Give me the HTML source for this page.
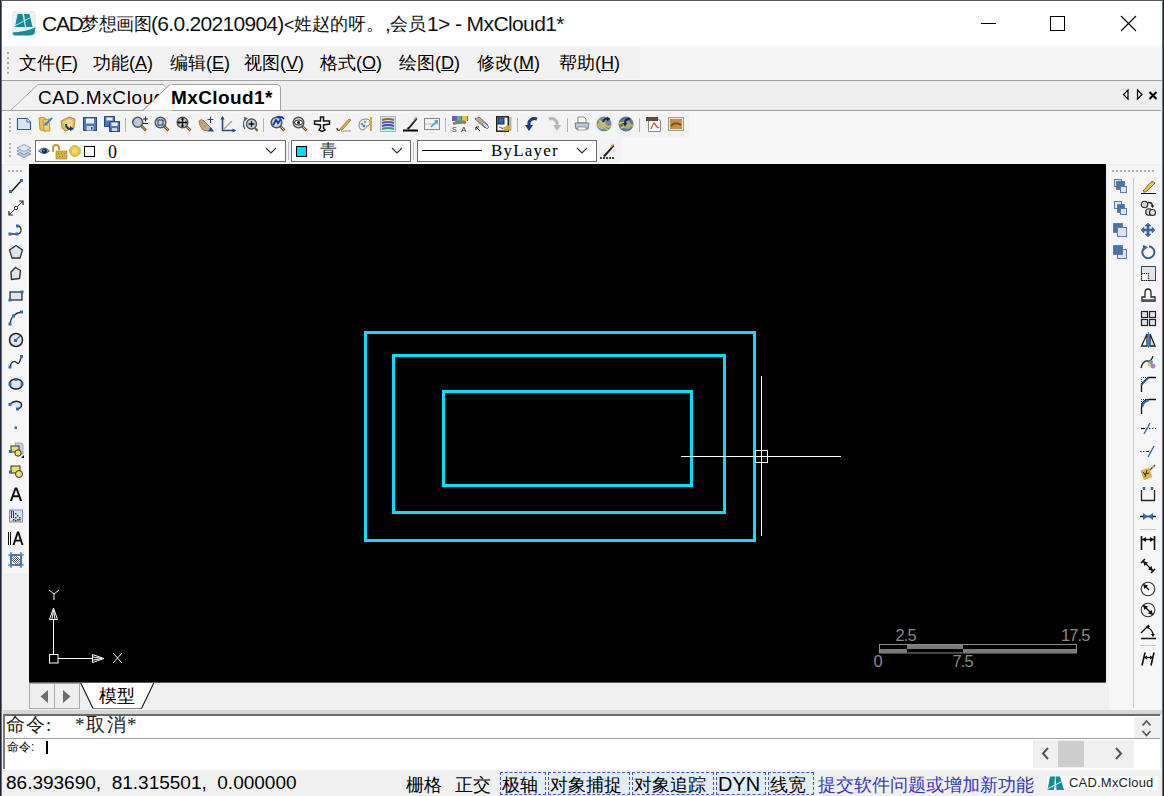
<!DOCTYPE html>
<html><head><meta charset="utf-8">
<style>
*{box-sizing:border-box}
html,body{margin:0;padding:0;width:1164px;height:796px;overflow:hidden;background:#f0f0f0;font-family:"Liberation Sans",sans-serif;color:#000}
.a{position:absolute}
svg{position:absolute;overflow:visible}
</style></head><body>
<div class="a" style="left:0;top:0;width:1164px;height:796px;background:#f0f0f0">

<!-- title bar -->
<div class="a" style="left:0;top:0;width:1164px;height:46px;background:#fff"></div>
<div class="a" style="left:0;top:11px;font-size:21px;line-height:26px;white-space:nowrap;color:#111">
<span class="a" style="left:42px;letter-spacing:-1.2px">CAD</span>
<span class="a" style="left:81px;top:0px;font-size:17.5px;letter-spacing:-0.4px">梦想画图</span>
<span class="a" style="left:151px;letter-spacing:-0.7px">(6.0.20210904)</span><span class="a" style="left:284px;top:1px;font-size:18px">&lt;</span>
<span class="a" style="left:294px;top:0px;font-size:18px;letter-spacing:0px">姓赵的呀。</span>
<span class="a" style="left:385px">,</span>
<span class="a" style="left:390px;top:0px;font-size:18px">会员</span>
<span class="a" style="left:427px;letter-spacing:-0.6px">1&gt; - MxCloud1*</span>
</div>

<!-- menu bar -->
<div class="a" style="left:0;top:46px;width:1164px;height:34px;background:#f5f5f5"></div><div class="a" style="left:4px;top:47px;width:636px;height:32px;background:#f2f2f2"></div>
<div class="a" id="menu" style="left:19px;top:51px;font-size:18px;line-height:24px;white-space:nowrap">
<span class="a" style="left:0">文件(<u>F</u>)</span>
<span class="a" style="left:74px">功能(<u>A</u>)</span>
<span class="a" style="left:151px">编辑(<u>E</u>)</span>
<span class="a" style="left:225px">视图(<u>V</u>)</span>
<span class="a" style="left:301px">格式(<u>O</u>)</span>
<span class="a" style="left:380px">绘图(<u>D</u>)</span>
<span class="a" style="left:458px">修改(<u>M</u>)</span>
<span class="a" style="left:540px">帮助(<u>H</u>)</span>
</div>

<!-- tab bar -->
<div class="a" style="left:0;top:80px;width:1162px;height:1px;background:#a0a0a0"></div>
<div class="a" style="left:0;top:81px;width:1162px;height:29px;background:#eeeeee"></div>
<div class="a" style="left:0;top:110px;width:1161px;height:1px;background:#a0a0a0"></div>

<!-- toolbar area -->
<div class="a" style="left:0;top:111px;width:1162px;height:53px;background:#f7f7f7"></div><div class="a" style="left:4px;top:113px;width:685px;height:24px;background:#f3f3f3"></div><div class="a" style="left:4px;top:138px;width:618px;height:25px;background:#f3f3f3"></div>

<!-- canvas -->
<div class="a" style="left:29px;top:164px;width:1077px;height:519px;background:#000"></div>

<!-- bottom tab bar -->
<div class="a" style="left:0;top:683px;width:1107px;height:27px;background:#f0f0f0"></div>

<!-- splitter -->
<div class="a" style="left:3px;top:710px;width:1159px;height:5px;background:#d6d6d6"></div>

<!-- command area -->
<div class="a" style="left:3px;top:714px;width:1157px;height:55px;background:#fff;border-left:2px solid #7a7a7a;border-top:2px solid #6a6a6a"></div>
<div class="a" style="left:4px;top:738px;width:1156px;height:1px;background:#a0a0a0"></div>

<!-- status bar -->
<div class="a" style="left:0;top:769px;width:1162px;height:27px;background:#f0f0f0"></div>


<!-- title icon -->
<svg style="left:12px;top:11px" width="24" height="24" viewBox="0 0 24 24">
<rect x="0" y="0" width="24" height="24" rx="3" fill="#efefef"/>
<polygon points="5.5,3 10.5,3 13,16 3,16" fill="#178a98"/>
<polygon points="12,3 17.5,3 20.5,16 14,16" fill="#178a98"/>
<line x1="2.5" y1="15" x2="19.5" y2="6" stroke="#a8ecf4" stroke-width="1"/>
<path d="M0.5,21.5 Q12,21 23.5,16.5 L22.5,22.5 Q21,24.5 17,24.5 L3,24.5 Q0.5,24 0.5,21.5Z" fill="#178a98"/>
</svg>
<!-- window buttons -->
<div class="a" style="left:981px;top:23px;width:15px;height:1px;background:#000"></div>
<div class="a" style="left:1050px;top:16px;width:15px;height:15px;border:1px solid #000"></div>
<svg style="left:1120px;top:15px" width="17" height="17" viewBox="0 0 17 17"><path d="M1,1L16,16M16,1L1,16" stroke="#000" stroke-width="1.1"/></svg>
<!-- menu gripper -->
<svg style="left:7px;top:52px" width="3" height="22"><g fill="#a8a8a8"><rect x="0" y="0" width="2" height="2"/><rect x="0" y="5" width="2" height="2"/><rect x="0" y="10" width="2" height="2"/><rect x="0" y="15" width="2" height="2"/><rect x="0" y="20" width="2" height="2"/></g></svg>
<!-- tabs -->
<svg style="left:0;top:80px" width="300" height="32" viewBox="0 0 300 32">
<path d="M10.5,30.5 L38,4.5 L163,4.5 L168,9 L168,30.5" fill="#f2f2f2" stroke="#a8a8a8" stroke-width="1"/>
<path d="M143,30.5 L170,4.5 L277,4.5 Q280.5,4.5 280.5,8 L280.5,30.5" fill="#ffffff" stroke="#a0a0a0" stroke-width="1"/>
<line x1="0" y1="30.5" x2="300" y2="30.5" stroke="#a0a0a0" stroke-width="1"/>
</svg>
<div class="a" style="left:38px;top:86px;width:122px;overflow:hidden;font-size:19px;line-height:24px;white-space:nowrap;letter-spacing:0.6px">CAD.MxCloud</div>
<svg style="left:140px;top:82px" width="32" height="28" viewBox="0 0 32 28"><path d="M3,28.5 L30,2.5 L32,2.5 L32,28.5Z" fill="#fff"/><path d="M3,28.5 L30,2.5" stroke="#a0a0a0" stroke-width="1"/></svg>
<div class="a" style="left:171px;top:86px;font-size:19px;line-height:24px;font-weight:bold;white-space:nowrap;letter-spacing:0.4px">MxCloud1*</div>
<svg style="left:1120px;top:88px" width="40" height="14" viewBox="0 0 40 14">
<path d="M8,2 L8,11 L3.5,6.5Z" fill="none" stroke="#000" stroke-width="1.2"/>
<path d="M17.5,2 L17.5,11 L22,6.5Z" fill="none" stroke="#000" stroke-width="1.2"/>
<path d="M29.5,4 L36.5,11 M36.5,4 L29.5,11" stroke="#000" stroke-width="2"/>
</svg>

<!--ICONS START-->
<div class="a" style="left:2px;top:164px;width:27px;height:519px;background:#f0f0f0"></div>
<div class="a" style="left:4px;top:166px;width:24px;height:407px;background:#f6f6f6"></div>
<svg style="left:8px;top:170px" width="16" height="3" viewBox="0 0 16 3"><rect x="0" y="0" width="2" height="2" fill="#b0b0b0"/><rect x="4" y="0" width="2" height="2" fill="#b0b0b0"/><rect x="8" y="0" width="2" height="2" fill="#b0b0b0"/><rect x="12" y="0" width="2" height="2" fill="#b0b0b0"/></svg>
<svg style="left:8px;top:178px" width="16" height="16" viewBox="0 0 16 16"><line x1="3" y1="14" x2="13" y2="3" stroke="#111" stroke-width="1.4"/><rect x="1" y="12" width="3" height="3" fill="#2f6db5"/><rect x="12" y="1" width="3" height="3" fill="#2f6db5"/></svg>
<svg style="left:8px;top:200px" width="16" height="16" viewBox="0 0 16 16"><line x1="1.5" y1="14.5" x2="14.5" y2="1.5" stroke="#222" stroke-width="1"/><path d="M1,11 L1,15 L5,15 M11,1 L15,1 L15,5" fill="none" stroke="#222" stroke-width="1.2"/><circle cx="8" cy="8" r="1.6" fill="#fff" stroke="#333" stroke-width="0.8"/></svg>
<svg style="left:8px;top:222px" width="16" height="16" viewBox="0 0 16 16"><path d="M2,12 L9,12 Q13,12 13,8 Q13,4 9.5,4" fill="none" stroke="#333" stroke-width="1.3"/><rect x="0.5" y="10.5" width="3" height="3" fill="#2f6db5"/><rect x="7.5" y="10.5" width="3" height="3" fill="#2f6db5"/><rect x="8" y="2.5" width="3" height="3" fill="#2f6db5"/></svg>
<svg style="left:8px;top:244px" width="16" height="16" viewBox="0 0 16 16"><polygon points="8,1.5 14.5,6 12,14 4,14 1.5,6" fill="#dde5ef" stroke="#333" stroke-width="1.3"/></svg>
<svg style="left:8px;top:266px" width="16" height="16" viewBox="0 0 16 16"><polygon points="7.5,1.5 12.5,4.5 11.5,12.5 3.5,13.5 3,6" fill="#dde5ef" stroke="#333" stroke-width="1.4"/></svg>
<svg style="left:8px;top:288px" width="16" height="16" viewBox="0 0 16 16"><rect x="2" y="4" width="12" height="8" fill="#dfe7f1" stroke="#222" stroke-width="1.2"/><rect x="0.5" y="10.5" width="3" height="3" fill="#2f6db5"/><rect x="12.5" y="2.5" width="3" height="3" fill="#2f6db5"/></svg>
<svg style="left:8px;top:310px" width="16" height="16" viewBox="0 0 16 16"><path d="M2,14 Q3,4 13,2" fill="none" stroke="#333" stroke-width="1.3"/><rect x="0.5" y="12.5" width="3" height="3" fill="#2f6db5"/><rect x="4" y="4.5" width="3" height="3" fill="#2f6db5"/><rect x="12" y="0.5" width="3" height="3" fill="#2f6db5"/></svg>
<svg style="left:8px;top:332px" width="16" height="16" viewBox="0 0 16 16"><circle cx="8" cy="8" r="6.5" fill="#e2e8f0" stroke="#222" stroke-width="1.5"/><line x1="7.5" y1="8.5" x2="12" y2="4" stroke="#2f6db5" stroke-width="1.2"/><rect x="6" y="7" width="3" height="3" fill="#2f6db5"/></svg>
<svg style="left:8px;top:354px" width="16" height="16" viewBox="0 0 16 16"><path d="M2,13 C4,6 7,7 9,9 C11,11 12,6 13.5,3" fill="none" stroke="#333" stroke-width="1.3"/><rect x="0.5" y="11.5" width="3" height="3" fill="#2f6db5"/><rect x="12" y="1" width="3" height="3" fill="#2f6db5"/></svg>
<svg style="left:8px;top:376px" width="16" height="16" viewBox="0 0 16 16"><ellipse cx="8" cy="8" rx="6.5" ry="5" fill="#dfe6ef" stroke="#222" stroke-width="1.5"/><rect x="0.5" y="6.5" width="3" height="3" fill="#2f6db5"/><rect x="12.5" y="6.5" width="3" height="3" fill="#2f6db5"/><rect x="6.5" y="2" width="3" height="3" fill="#2f6db5"/></svg>
<svg style="left:8px;top:398px" width="16" height="16" viewBox="0 0 16 16"><path d="M2,6 Q8,1 13,5 Q15,9 10,11" fill="#dfe6ef" stroke="#222" stroke-width="1.5"/><rect x="0.5" y="5" width="3" height="3" fill="#2f6db5"/><rect x="8" y="9.5" width="3" height="3" fill="#2f6db5"/></svg>
<svg style="left:8px;top:420px" width="16" height="16" viewBox="0 0 16 16"><rect x="6.5" y="6.5" width="2.5" height="2.5" fill="#2f6db5"/></svg>
<svg style="left:8px;top:442px" width="16" height="16" viewBox="0 0 16 16"><path d="M7,1 L14,1 L15,3 L15,12 L9,12 Z" fill="#c8d0dc" stroke="#8a96a8" stroke-width="0.8"/><rect x="3" y="4" width="8" height="6" fill="#e8e070" stroke="#333" stroke-width="1"/><circle cx="10" cy="11" r="3.2" fill="#e8e070" stroke="#333" stroke-width="1"/><rect x="1" y="8" width="3" height="3" fill="#2f6db5"/><polygon points="13,16 16,13 16,16" fill="#000"/></svg>
<svg style="left:8px;top:464px" width="16" height="16" viewBox="0 0 16 16"><rect x="3" y="2" width="9" height="7" fill="#e8e070" stroke="#333" stroke-width="1"/><circle cx="11" cy="10" r="3.5" fill="#e8e070" stroke="#333" stroke-width="1"/><rect x="1" y="6.5" width="3" height="3" fill="#2f6db5"/></svg>
<svg style="left:8px;top:486px" width="16" height="16" viewBox="0 0 16 16"><path d="M1.8,15 L6.8,1.5 L9.2,1.5 L14.2,15 L12,15 L10.7,11.2 L5.3,11.2 L4,15 Z M6,9.3 L10,9.3 L8,3.8 Z" fill="#111"/></svg>
<svg style="left:8px;top:508px" width="16" height="16" viewBox="0 0 16 16"><rect x="1.5" y="2" width="13" height="12" fill="#d6e2f4" stroke="#6f8fbf" stroke-width="1"/><path d="M3.5,3 L3.5,10 M5.5,3 L5.5,10" stroke="#222" stroke-width="0.9"/><path d="M2.5,3 L4.5,3" stroke="#222" stroke-width="0.8"/><g fill="#333"><rect x="7" y="5" width="1.5" height="1.5"/><rect x="9" y="7" width="1.5" height="1.5"/><rect x="7" y="9" width="1.5" height="1.5"/><rect x="11" y="9" width="1.5" height="1.5"/><rect x="9" y="11" width="1.5" height="1.5"/><rect x="5" y="11" width="1.5" height="1.5"/><rect x="11" y="11" width="1.5" height="1.5"/><rect x="7" y="12" width="1.5" height="1.5"/></g><g fill="#d87a30"><rect x="4" y="12" width="1.5" height="1.5"/><rect x="10" y="12" width="1.5" height="1.5"/></g></svg>
<svg style="left:8px;top:530px" width="16" height="16" viewBox="0 0 16 16"><rect x="0" y="2" width="1" height="13" fill="#111"/><rect x="2" y="2" width="1" height="13" fill="#111"/><path d="M4.5,15 L9,1.5 L11,1.5 L15.5,15 L13.5,15 L12.3,11.5 L7.7,11.5 L6.5,15 Z M8.3,9.7 L11.7,9.7 L10,4.5 Z" fill="#111"/></svg>
<svg style="left:8px;top:552px" width="16" height="16" viewBox="0 0 16 16"><rect x="3" y="3" width="10" height="10" fill="#fff" stroke="#2f6db5" stroke-width="1.4"/><path d="M3,7 L9,13 M3,3 L13,13 M7,3 L13,9 M5,3 L13,11 M3,5 L11,13" stroke="#555" stroke-width="0.8"/><path d="M0,3 L16,3 M0,13 L16,13 M3,0 L3,16 M13,0 L13,16" stroke="#2f6db5" stroke-width="1.2"/></svg>
<div class="a" style="left:1106px;top:164px;width:56px;height:546px;background:#f0f0f0"></div>
<div class="a" style="left:1109px;top:166px;width:52px;height:544px;background:#f6f6f6"></div>
<svg style="left:1112px;top:170px" width="44" height="3" viewBox="0 0 44 3"><rect x="0" y="0" width="2" height="2" fill="#b0b0b0"/><rect x="4" y="0" width="2" height="2" fill="#b0b0b0"/><rect x="8" y="0" width="2" height="2" fill="#b0b0b0"/><rect x="12" y="0" width="2" height="2" fill="#b0b0b0"/><rect x="16" y="0" width="2" height="2" fill="#b0b0b0"/><rect x="20" y="0" width="2" height="2" fill="#b0b0b0"/><rect x="24" y="0" width="2" height="2" fill="#b0b0b0"/><rect x="28" y="0" width="2" height="2" fill="#b0b0b0"/><rect x="32" y="0" width="2" height="2" fill="#b0b0b0"/><rect x="36" y="0" width="2" height="2" fill="#b0b0b0"/><rect x="40" y="0" width="2" height="2" fill="#b0b0b0"/></svg>
<div class="a" style="left:1133px;top:178px;width:1px;height:530px;background:#c8c8c8"></div>
<svg style="left:1112px;top:178px" width="16" height="16" viewBox="0 0 16 16"><rect x="2.5" y="1.5" width="7" height="7" fill="#dbe6f3" stroke="#5a7fb3"/><rect x="4.5" y="3.5" width="8" height="8" fill="#4e73aa" stroke="#2a4a80" stroke-dasharray="1,1"/><rect x="8.5" y="8.5" width="6" height="6" fill="#dbe6f3" stroke="#5a7fb3"/></svg>
<svg style="left:1112px;top:200px" width="16" height="16" viewBox="0 0 16 16"><rect x="2.5" y="1.5" width="7" height="7" fill="#dbe6f3" stroke="#5a7fb3"/><rect x="5.5" y="4.5" width="7" height="8" fill="#4e73aa" stroke="#2a4a80" stroke-dasharray="1,1"/><rect x="8.5" y="8.5" width="6" height="6" fill="#dbe6f3" stroke="#5a7fb3"/></svg>
<svg style="left:1112px;top:222px" width="16" height="16" viewBox="0 0 16 16"><rect x="1.5" y="1.5" width="9" height="9" fill="#4e73aa" stroke="#2a4a80" stroke-width="1" stroke-dasharray="1,1"/><rect x="5.5" y="5.5" width="9" height="9" fill="#dbe6f3" stroke="#5a7fb3" stroke-width="1"/></svg>
<svg style="left:1112px;top:244px" width="16" height="16" viewBox="0 0 16 16"><rect x="5.5" y="5.5" width="9" height="9" fill="#dbe6f3" stroke="#5a7fb3" stroke-width="1"/><rect x="1.5" y="1.5" width="9" height="9" fill="#4e73aa" stroke="#2a4a80" stroke-width="1" stroke-dasharray="1,1"/></svg>
<svg style="left:1140px;top:178px" width="16" height="16" viewBox="0 0 16 16"><path d="M3,13 L12,3 L15,5 L6,14 Z" fill="#f0c040" stroke="#555" stroke-width="0.8"/><path d="M3,13 L6,14 L4,15 Z" fill="#c88"/><line x1="1" y1="15.5" x2="16" y2="15.5" stroke="#111" stroke-width="1"/></svg>
<svg style="left:1140px;top:200px" width="16" height="16" viewBox="0 0 16 16"><circle cx="4.5" cy="4.5" r="3.2" fill="#d0d4dc" stroke="#222" stroke-width="1.1"/><path d="M8,2.5 Q12,2 12.5,6" fill="none" stroke="#222" stroke-width="1.4"/><polygon points="10.5,5.5 14.5,5.5 12.5,8" fill="#222"/><circle cx="9" cy="12" r="3.3" fill="#d0d4dc" stroke="#222" stroke-width="1.1"/><circle cx="12.5" cy="12.5" r="3" fill="#e4e6ea" stroke="#222" stroke-width="1.1"/></svg>
<svg style="left:1140px;top:222px" width="16" height="16" viewBox="0 0 16 16"><path d="M8,1 L11,4 L9,4 L9,7 L12,7 L12,5 L15,8 L12,11 L12,9 L9,9 L9,12 L11,12 L8,15 L5,12 L7,12 L7,9 L4,9 L4,11 L1,8 L4,5 L4,7 L7,7 L7,4 L5,4 Z" fill="#3a6ab0" stroke="#244a88" stroke-width="0.5"/></svg>
<svg style="left:1140px;top:244px" width="16" height="16" viewBox="0 0 16 16"><path d="M4,4 A6,6 0 1 0 9,2.2" fill="none" stroke="#3a5f9a" stroke-width="2"/><polygon points="3,1 8,3 3,7" fill="#3a5f9a"/></svg>
<svg style="left:1140px;top:266px" width="16" height="16" viewBox="0 0 16 16"><rect x="1.5" y="0.5" width="14" height="14" fill="#dde6f0" stroke="#444" stroke-width="1"/><rect x="1.5" y="7.5" width="7" height="7" fill="#f4f6f8" stroke="#111" stroke-width="1.2" stroke-dasharray="1.2,1"/></svg>
<svg style="left:1140px;top:288px" width="16" height="16" viewBox="0 0 16 16"><path d="M2,13 L2,9 L5,9 L5,5 Q5,1 8,1 Q11,1 11,5 L11,9 L15,9 L15,13 Z" fill="#fff" stroke="#222" stroke-width="1.3"/><path d="M3,11.5 L14,11.5" stroke="#3a7fd0" stroke-width="1"/></svg>
<svg style="left:1140px;top:310px" width="16" height="16" viewBox="0 0 16 16"><rect x="1.5" y="1.5" width="6" height="6" fill="#dde6f0" stroke="#222" stroke-width="1.2"/><rect x="9.5" y="1.5" width="6" height="6" fill="#dde6f0" stroke="#222" stroke-width="1.2"/><rect x="1.5" y="9.5" width="6" height="6" fill="#dde6f0" stroke="#222" stroke-width="1.2"/><rect x="9.5" y="9.5" width="6" height="6" fill="#dde6f0" stroke="#222" stroke-width="1.2"/></svg>
<svg style="left:1140px;top:332px" width="16" height="16" viewBox="0 0 16 16"><polygon points="7,2 7,14 1.5,14" fill="#fff" stroke="#222" stroke-width="1.3"/><polygon points="10,2 10,14 15,14" fill="#dde6f0" stroke="#222" stroke-width="1.3"/><line x1="8.5" y1="0" x2="8.5" y2="16" stroke="#3a7fd0" stroke-width="1"/></svg>
<svg style="left:1140px;top:354px" width="16" height="16" viewBox="0 0 16 16"><path d="M1,14 Q3,6 8,7 Q11,8 13,2" fill="none" stroke="#222" stroke-width="1.3"/><circle cx="10" cy="10" r="2.5" fill="#e8c84a"/><circle cx="13" cy="12" r="2.5" fill="#b080d0"/><circle cx="11" cy="8" r="2" fill="#5a9ad8"/></svg>
<svg style="left:1140px;top:376px" width="16" height="16" viewBox="0 0 16 16"><path d="M1.5,16 L1.5,8 L8,1.5 L16,1.5" fill="none" stroke="#111" stroke-width="1.3"/><path d="M1.5,8 L1.5,1.5 L8,1.5" fill="none" stroke="#333" stroke-width="1" stroke-dasharray="1,1"/><line x1="1.5" y1="9" x2="9" y2="1.5" stroke="#2f6db5" stroke-width="1.6"/></svg>
<svg style="left:1140px;top:398px" width="16" height="16" viewBox="0 0 16 16"><path d="M1.5,16 L1.5,9 Q2,2 9,1.5 L16,1.5" fill="none" stroke="#111" stroke-width="1.3"/><path d="M1.5,8 L1.5,1.5 L8,1.5" fill="none" stroke="#333" stroke-width="1" stroke-dasharray="1,1"/><path d="M2.5,9 Q3,3 9,2.5" fill="none" stroke="#2f6db5" stroke-width="1.8"/></svg>
<svg style="left:1140px;top:420px" width="16" height="16" viewBox="0 0 16 16"><line x1="1" y1="8.5" x2="5" y2="8.5" stroke="#111" stroke-width="1.2"/><line x1="9" y1="8.5" x2="16" y2="8.5" stroke="#333" stroke-width="1" stroke-dasharray="1.5,1.5"/><line x1="4" y1="14" x2="10" y2="3" stroke="#2f6db5" stroke-width="1.4"/></svg>
<svg style="left:1140px;top:442px" width="16" height="16" viewBox="0 0 16 16"><line x1="0" y1="9.5" x2="7" y2="9.5" stroke="#333" stroke-width="1" stroke-dasharray="1.5,1.5"/><line x1="7" y1="9.5" x2="9" y2="9.5" stroke="#111" stroke-width="1.2"/><line x1="8" y1="15" x2="14" y2="4" stroke="#2f6db5" stroke-width="1.4"/></svg>
<svg style="left:1140px;top:464px" width="16" height="16" viewBox="0 0 16 16"><rect x="2" y="5" width="9" height="10" fill="#e0b040" transform="rotate(-20 6 10)"/><path d="M3,8 L6,12 M7,6 L5,13 M9,9 L4,10" stroke="#333" stroke-width="1"/><path d="M10,6 L15,1" stroke="#555" stroke-width="1.5"/><circle cx="13" cy="3" r="1" fill="#aaa"/></svg>
<svg style="left:1140px;top:486px" width="16" height="16" viewBox="0 0 16 16"><path d="M1.5,4 L1.5,14.5 L14.5,14.5 L14.5,4" fill="none" stroke="#222" stroke-width="1.3"/><path d="M4,4 L4,1 M12,4 L12,1" stroke="#2f6db5" stroke-width="2.5"/></svg>
<svg style="left:1140px;top:508px" width="16" height="16" viewBox="0 0 16 16"><line x1="0" y1="8.5" x2="16" y2="8.5" stroke="#111" stroke-width="1.5"/><polygon points="3,5 8,8.5 3,12" fill="#2f6db5"/><polygon points="13,5 8,8.5 13,12" fill="#2f6db5"/></svg>
<svg style="left:1140px;top:536px" width="16" height="16" viewBox="0 0 16 16"><path d="M1.5,0 L1.5,14 M14.5,0 L14.5,14" stroke="#111" stroke-width="1.6"/><line x1="1.5" y1="3.5" x2="14.5" y2="3.5" stroke="#111" stroke-width="1.3"/><polygon points="2,3.5 6,1 6,6" fill="#111"/><polygon points="14,3.5 10,1 10,6" fill="#111"/></svg>
<svg style="left:1140px;top:558px" width="16" height="16" viewBox="0 0 16 16"><path d="M1,5 L5,1 M11,15 L15,11" stroke="#111" stroke-width="1.6"/><line x1="3" y1="3" x2="13" y2="13" stroke="#111" stroke-width="1.3"/><polygon points="3,3 8,4.5 4.5,8" fill="#111"/><polygon points="13,13 8,11.5 11.5,8" fill="#111"/></svg>
<svg style="left:1140px;top:581px" width="16" height="16" viewBox="0 0 16 16"><circle cx="8" cy="8" r="6.8" fill="none" stroke="#333" stroke-width="1.1"/><line x1="4" y1="4" x2="9" y2="9" stroke="#111" stroke-width="1.4"/><polygon points="3,3 8,4.5 4.5,8" fill="#111"/></svg>
<svg style="left:1140px;top:602px" width="16" height="16" viewBox="0 0 16 16"><circle cx="8" cy="8" r="6.8" fill="none" stroke="#333" stroke-width="1.1"/><line x1="3.5" y1="3.5" x2="12.5" y2="12.5" stroke="#111" stroke-width="1.4"/><polygon points="3,3 8,4.5 4.5,8" fill="#111"/><polygon points="13,13 8,11.5 11.5,8" fill="#111"/></svg>
<svg style="left:1140px;top:623px" width="16" height="16" viewBox="0 0 16 16"><path d="M1,10 L9,2" stroke="#111" stroke-width="1.4"/><line x1="1" y1="15.5" x2="16" y2="15.5" stroke="#111" stroke-width="1.5"/><path d="M7,4 Q13,7 13,12" fill="none" stroke="#111" stroke-width="1.3"/><polygon points="11,11 15,11 13,14" fill="#111"/><polygon points="6,3 10,3 8,6" fill="#111"/></svg>
<svg style="left:1140px;top:652px" width="16" height="16" viewBox="0 0 16 16"><path d="M2,13.5 L5,0.5 M11,13.5 L14,0.5" stroke="#111" stroke-width="1.6"/><line x1="4" y1="5.5" x2="13" y2="5.5" stroke="#111" stroke-width="1.3"/><polygon points="4,5.5 7,3.5 7,7.5" fill="#111"/><polygon points="13,5.5 10,3.5 10,7.5" fill="#111"/></svg>
<div class="a" style="left:1140px;top:529px;width:16px;height:1px;background:#c8c8c8"></div>
<div class="a" style="left:1140px;top:645px;width:16px;height:1px;background:#c8c8c8"></div>
<svg style="left:9px;top:118px" width="3" height="16" viewBox="0 0 3 16"><rect x="0" y="0" width="2" height="2" fill="#b0b0b0"/><rect x="0" y="4" width="2" height="2" fill="#b0b0b0"/><rect x="0" y="8" width="2" height="2" fill="#b0b0b0"/><rect x="0" y="12" width="2" height="2" fill="#b0b0b0"/></svg>
<svg style="left:16px;top:116px" width="16" height="16" viewBox="0 0 16 16"><path d="M1.5,2.5 L11,2.5 L14.5,6 L14.5,13.5 L1.5,13.5 Z" fill="#d8e6f4" stroke="#3a5f9a" stroke-width="1.2"/><path d="M11,2.5 L11,6 L14.5,6" fill="#fff" stroke="#3a5f9a" stroke-width="1"/></svg>
<svg style="left:38px;top:116px" width="16" height="16" viewBox="0 0 16 16"><path d="M1,2 L6,1 L8,3 L8,15 L2,14 Z" fill="#e8c050" stroke="#b08a30" stroke-width="0.8"/><path d="M5,4 L11,3 L12,15 L6,15 Z" fill="#f0d070" stroke="#b08a30" stroke-width="0.8"/><path d="M8,8 L14,2" stroke="#3a8ad0" stroke-width="2"/><polygon points="7,6 10,9 6,10" fill="#3a8ad0"/></svg>
<svg style="left:60px;top:116px" width="16" height="16" viewBox="0 0 16 16"><path d="M1,5 L9,1 L15,3 L14,12 L5,15 L2,12 Z" fill="#e0b850" stroke="#a08040" stroke-width="0.8"/><path d="M3,6 L9,3 L13,5 L12,11 L6,13 Z" fill="#f0d890"/><path d="M6,8 Q6,13 11,13" fill="none" stroke="#1a3a6a" stroke-width="2"/><polygon points="10,10 14,13 10,15" fill="#1a3a6a"/></svg>
<svg style="left:82px;top:116px" width="16" height="16" viewBox="0 0 16 16"><rect x="1.5" y="1.5" width="13" height="13" fill="#4a78b8" stroke="#2a4a80" stroke-width="1"/><rect x="4" y="2.5" width="8" height="5" fill="#eef2f8"/><rect x="4.5" y="10" width="7" height="4.5" fill="#c8d4e4"/><rect x="9" y="11" width="1.5" height="2.5" fill="#2a4a80"/></svg>
<svg style="left:104px;top:116px" width="16" height="16" viewBox="0 0 16 16"><rect x="0.5" y="0.5" width="10" height="10" fill="#4a78b8" stroke="#2a4a80" stroke-width="1"/><rect x="2.5" y="1.5" width="6" height="3" fill="#eef2f8"/><rect x="5.5" y="5.5" width="10" height="10" fill="#4a78b8" stroke="#2a4a80" stroke-width="1"/><rect x="7.5" y="6.5" width="6" height="3.5" fill="#eef2f8"/><rect x="8" y="12" width="5" height="3" fill="#c8d4e4"/></svg>
<svg style="left:132px;top:116px" width="16" height="16" viewBox="0 0 16 16"><line x1="9" y1="9.5" x2="14" y2="14.5" stroke="#7a5a30" stroke-width="2.6"/><line x1="9.5" y1="10" x2="13.5" y2="14" stroke="#e0b060" stroke-width="1"/><circle cx="5.7" cy="6.2" r="5" fill="#b8c8dc" stroke="#555" stroke-width="1.5"/><path d="M13.5,0.5 L13.5,5.5 M11,3 L16,3 M11,7.5 L16,7.5" stroke="#222" stroke-width="1.1"/></svg>
<svg style="left:154px;top:116px" width="16" height="16" viewBox="0 0 16 16"><line x1="10" y1="10" x2="14.5" y2="14.5" stroke="#7a5a30" stroke-width="2.6"/><line x1="10.5" y1="10.5" x2="14" y2="14" stroke="#e0b060" stroke-width="1"/><circle cx="6.5" cy="6.5" r="5.3" fill="#c8d4e0" stroke="#555" stroke-width="1.5"/><rect x="4" y="4" width="5" height="5" fill="none" stroke="#2a4a80" stroke-width="1.2"/></svg>
<svg style="left:176px;top:116px" width="16" height="16" viewBox="0 0 16 16"><line x1="10" y1="10" x2="14.5" y2="14.5" stroke="#7a5a30" stroke-width="2.6"/><line x1="10.5" y1="10.5" x2="14" y2="14" stroke="#e0b060" stroke-width="1"/><circle cx="6.5" cy="6.5" r="5.3" fill="#c8d4e0" stroke="#555" stroke-width="1.5"/><path d="M6.5,2.5 L6.5,10.5 M2.5,6.5 L10.5,6.5" stroke="#111" stroke-width="1.5"/><polygon points="6.5,1.5 8.5,3.5 4.5,3.5" fill="#111"/><polygon points="6.5,11.5 8.5,9.5 4.5,9.5" fill="#111"/><polygon points="1.5,6.5 3.5,4.5 3.5,8.5" fill="#111"/><polygon points="11.5,6.5 9.5,4.5 9.5,8.5" fill="#111"/></svg>
<svg style="left:198px;top:116px" width="16" height="16" viewBox="0 0 16 16"><path d="M1,5 Q3,2 6,5 L12,11 Q13,14 10,15 L5,14 Q1,10 1,5Z" fill="#c8a888" stroke="#8a6a50" stroke-width="0.8"/><path d="M3,6 L8,11 M5,4 L10,9" stroke="#5a6ab0" stroke-width="0.8" stroke-dasharray="1,1"/><path d="M12.5,0.5 L12.5,7 M9.5,3.5 L15.5,3.5" stroke="#2a4a80" stroke-width="1.2"/><polygon points="10,15.5 13,11 16,15.5" fill="#2a4a80"/></svg>
<svg style="left:220px;top:116px" width="16" height="16" viewBox="0 0 16 16"><path d="M2.5,1 L2.5,14.5 L15.5,14.5" fill="none" stroke="#2a4a80" stroke-width="1.6"/><polygon points="2.5,0 0.5,3.5 4.5,3.5" fill="#2a4a80"/><polygon points="16,14.5 12.5,12.5 12.5,16.5" fill="#2a4a80"/><line x1="4" y1="13" x2="12" y2="5" stroke="#9aa4b0" stroke-width="1.3"/></svg>
<svg style="left:242px;top:116px" width="16" height="16" viewBox="0 0 16 16"><path d="M3,3 Q0,8 3,13" fill="none" stroke="#556" stroke-width="1.2"/><polygon points="2,1 6,2 3,5" fill="#556"/><circle cx="9.5" cy="8" r="5" fill="#c8d4e0" stroke="#555" stroke-width="1.4"/><path d="M9.5,5 L9.5,11 M6.5,8 L12.5,8" stroke="#111" stroke-width="1.3"/><line x1="13" y1="12" x2="15.5" y2="15" stroke="#7a5a30" stroke-width="2"/></svg>
<svg style="left:270px;top:116px" width="16" height="16" viewBox="0 0 16 16"><line x1="10" y1="10" x2="14.5" y2="14.5" stroke="#7a5a30" stroke-width="2.6"/><line x1="10.5" y1="10.5" x2="14" y2="14" stroke="#e0b060" stroke-width="1"/><circle cx="6.5" cy="6.5" r="5.3" fill="#c8d4e0" stroke="#555" stroke-width="1.5"/><path d="M3,9 L6,4 L8,7 L11,3" fill="none" stroke="#1a3ab0" stroke-width="2"/><path d="M7,1 Q12,0 14,3" fill="none" stroke="#1a3ab0" stroke-width="2"/></svg>
<svg style="left:292px;top:116px" width="16" height="16" viewBox="0 0 16 16"><line x1="10" y1="10" x2="14.5" y2="14.5" stroke="#7a5a30" stroke-width="2.6"/><line x1="10.5" y1="10.5" x2="14" y2="14" stroke="#e0b060" stroke-width="1"/><circle cx="6.5" cy="6.5" r="5.3" fill="#d8d8d8" stroke="#555" stroke-width="1.5"/><ellipse cx="6.5" cy="6.5" rx="4" ry="2.5" fill="#fff" stroke="#222" stroke-width="1"/><circle cx="6.5" cy="6.5" r="1.5" fill="#111"/></svg>
<svg style="left:314px;top:116px" width="16" height="16" viewBox="0 0 16 16"><path d="M6.5,1 L9.5,1 L9.5,5 L15.5,5 L15.5,8 L9.5,9 L9.5,12 L11,14 L8,15.5 L5,14 L6.5,12 L6.5,9 L0.5,8 L0.5,5 L6.5,5 Z" fill="#fff" stroke="#111" stroke-width="1.5"/></svg>
<svg style="left:336px;top:116px" width="16" height="16" viewBox="0 0 16 16"><path d="M4,13 L13,3 L15,4 L6,14 Z" fill="#e8b030" stroke="#8a6a20" stroke-width="0.8"/><path d="M1,12 Q1,15 4,14" fill="none" stroke="#111" stroke-width="1.2"/><line x1="5" y1="15" x2="15" y2="15" stroke="#777" stroke-width="0.8"/></svg>
<svg style="left:358px;top:116px" width="16" height="16" viewBox="0 0 16 16"><path d="M1,9 Q1,3 8,3 Q13,3 12,8 Q11,10 9,10 Q8,13 5,14 Q1,14 1,9Z" fill="#e8eef4" stroke="#6a88b0" stroke-width="1"/><circle cx="4" cy="8" r="1.2" fill="#5a9a5a"/><circle cx="7" cy="6" r="1.2" fill="#d89030"/><circle cx="6" cy="10" r="1.3" fill="#3a7ab8"/><path d="M13,1 L13,15" stroke="#d89a30" stroke-width="1.8"/></svg>
<svg style="left:380px;top:116px" width="16" height="16" viewBox="0 0 16 16"><rect x="0.5" y="0.5" width="15" height="15" fill="#dde6f0" stroke="#aab4c0" stroke-width="1"/><path d="M2,4 Q8,2 14,4" fill="none" stroke="#8a7030" stroke-width="2.2"/><path d="M2,7 Q8,5 14,7" fill="none" stroke="#7a4ac0" stroke-width="2.2"/><path d="M2,10 Q8,8 14,10" fill="none" stroke="#3a4ad0" stroke-width="2.2"/><path d="M2,13 Q8,11 14,13" fill="none" stroke="#30a080" stroke-width="2.2"/></svg>
<svg style="left:402px;top:116px" width="16" height="16" viewBox="0 0 16 16"><line x1="1" y1="14.5" x2="16" y2="14.5" stroke="#000" stroke-width="2"/><path d="M5,13 L14,2 L15.5,3 L7,13.5 Z" fill="#222"/><path d="M12,4 L14.5,1" stroke="#e0a030" stroke-width="1.5"/><path d="M4,13.5 Q6,10 8,11" fill="#111"/></svg>
<svg style="left:424px;top:116px" width="16" height="16" viewBox="0 0 16 16"><rect x="0.5" y="2.5" width="15" height="11" fill="#f4f4f4" stroke="#888" stroke-width="1"/><line x1="1" y1="8" x2="15" y2="8" stroke="#aaa" stroke-width="0.8"/><line x1="7" y1="11" x2="13" y2="5" stroke="#3a9ad8" stroke-width="1.6"/><polygon points="14,4 10,4.5 13.5,8" fill="#3a9ad8"/></svg>
<svg style="left:452px;top:116px" width="16" height="16" viewBox="0 0 16 16"><rect x="0" y="0" width="16" height="5" fill="#7a5ab8"/><rect x="5" y="0" width="4" height="5" fill="#3ab8a8"/><rect x="10" y="0" width="5" height="5" fill="#e8c040"/><path d="M1,8 Q8,4 14,7" stroke="#7a8a70" stroke-width="3"/><text x="0" y="16" font-size="7" font-family="Liberation Sans" fill="#334">S</text><text x="9" y="16" font-size="8" font-family="Liberation Sans" fill="#334">A</text></svg>
<svg style="left:474px;top:116px" width="16" height="16" viewBox="0 0 16 16"><path d="M1,3 L5,1 L14,9 L11,12 Z" fill="#b8a898" stroke="#6a5a50" stroke-width="0.8"/><path d="M8,8 L13,13 L15,11 L10,6 Z" fill="#c8dcf0" stroke="#5a7090" stroke-width="0.8"/><path d="M2,11 L6,15 M2,11 L2,14 M2,11 L5,11" stroke="#222" stroke-width="1"/></svg>
<svg style="left:496px;top:116px" width="16" height="16" viewBox="0 0 16 16"><rect x="12" y="1" width="3.5" height="14" fill="#b0b0b0"/><rect x="0.75" y="0.75" width="11.5" height="14.5" fill="#fff" stroke="#222" stroke-width="1.5"/><rect x="2" y="2" width="6" height="6" fill="#2a6ab8" stroke="#1a2a4a" stroke-width="1"/><path d="M6,12 L12,9 L15,12 L12,15 L8,14 Z" fill="#e0a820"/><line x1="3" y1="11" x2="7" y2="12.5" stroke="#333" stroke-width="0.8"/></svg>
<svg style="left:524px;top:116px" width="16" height="16" viewBox="0 0 16 16"><path d="M13,3 Q8,1 5,6 L5,11" fill="none" stroke="#1a3a8a" stroke-width="3"/><polygon points="1,9 9,9 5,15" fill="#1a3a8a"/></svg>
<svg style="left:546px;top:116px" width="16" height="16" viewBox="0 0 16 16"><path d="M3,3 Q8,1 11,6 L11,11" fill="none" stroke="#b8b8b8" stroke-width="3"/><polygon points="7,9 15,9 11,15" fill="#b8b8b8"/></svg>
<svg style="left:574px;top:116px" width="16" height="16" viewBox="0 0 16 16"><path d="M4,1 L10,1 L12,3 L12,7 L4,7 Z" fill="#fff" stroke="#666" stroke-width="0.8"/><path d="M1,7 L15,7 L14,13 L2,13 Z" fill="#c0c8d8" stroke="#5a6070" stroke-width="0.8"/><rect x="4" y="11" width="8" height="3" fill="#fff" stroke="#666" stroke-width="0.6"/></svg>
<svg style="left:596px;top:116px" width="16" height="16" viewBox="0 0 16 16"><circle cx="8" cy="8" r="7.5" fill="#6f9098"/><circle cx="6" cy="9" r="4" fill="#a8b8b0"/><path d="M1,10 Q5,6 9,9 Q12,12 15,10" fill="none" stroke="#d8b838" stroke-width="2"/><path d="M3,4 L8,8 M9,12 L12,14" stroke="#e0c040" stroke-width="1.5"/><path d="M7,6 Q8,2 12,3" fill="none" stroke="#1a2a5a" stroke-width="2"/><polygon points="11,0.5 14.5,3 11,5.5" fill="#1a2a5a"/></svg>
<svg style="left:618px;top:116px" width="16" height="16" viewBox="0 0 16 16"><circle cx="8" cy="8" r="7.5" fill="#5a7a88"/><circle cx="9" cy="9" r="4" fill="#98a8a8"/><path d="M1,8 Q5,5 9,8 Q12,11 15,9" fill="none" stroke="#d8b838" stroke-width="2"/><path d="M3,12 L7,10" stroke="#e0c040" stroke-width="1.5"/><path d="M12,3 Q7,2 7,8" fill="none" stroke="#1a2a5a" stroke-width="2.2"/><polygon points="4.5,7 9.5,7 7,10.5" fill="#1a2a5a"/></svg>
<svg style="left:646px;top:116px" width="16" height="16" viewBox="0 0 16 16"><path d="M2.5,1.5 L11,1.5 L14.5,5 L14.5,15.5 L2.5,15.5 Z" fill="#fff" stroke="#888" stroke-width="1"/><rect x="0" y="1" width="12" height="4" fill="#5a4a3a"/><path d="M5,13 Q8,5 9,8 Q10,11 13,12" fill="none" stroke="#d04020" stroke-width="1.2"/></svg>
<svg style="left:668px;top:116px" width="16" height="16" viewBox="0 0 16 16"><rect x="0.5" y="1.5" width="15" height="13" fill="#f0e8d8" stroke="#999" stroke-width="1"/><rect x="2" y="3" width="12" height="10" fill="#c89040"/><path d="M3,10 Q7,5 13,9" stroke="#7a5020" stroke-width="2" fill="none"/></svg>
<div class="a" style="left:125px;top:118px;width:1px;height:14px;background:#b4b4b4"></div>
<div class="a" style="left:263px;top:118px;width:1px;height:14px;background:#b4b4b4"></div>
<div class="a" style="left:445px;top:118px;width:1px;height:14px;background:#b4b4b4"></div>
<div class="a" style="left:517px;top:118px;width:1px;height:14px;background:#b4b4b4"></div>
<div class="a" style="left:567px;top:118px;width:1px;height:14px;background:#b4b4b4"></div>
<div class="a" style="left:639px;top:118px;width:1px;height:14px;background:#b4b4b4"></div>
<svg style="left:9px;top:143px" width="3" height="16" viewBox="0 0 3 16"><rect x="0" y="0" width="2" height="2" fill="#b0b0b0"/><rect x="0" y="4" width="2" height="2" fill="#b0b0b0"/><rect x="0" y="8" width="2" height="2" fill="#b0b0b0"/><rect x="0" y="12" width="2" height="2" fill="#b0b0b0"/></svg>
<svg style="left:16px;top:143px" width="16" height="16" viewBox="0 0 16 16"><path d="M1,11 L8,7.5 L15,11 L8,14.5 Z" fill="#b8c8e0" stroke="#7a8aa8" stroke-width="0.8"/><path d="M1,8 L8,4.5 L15,8 L8,11.5 Z" fill="#c8d8ec" stroke="#7a8aa8" stroke-width="0.8"/><path d="M1,5 L8,1.5 L15,5 L8,8.5 Z" fill="#dce8f6" stroke="#7a8aa8" stroke-width="0.8"/></svg>
<div class="a" style="left:35px;top:140px;width:251px;height:22px;background:#fff;border:1px solid #6e6e6e"></div>
<svg style="left:38px;top:146px" width="12" height="10" viewBox="0 0 12 10"><path d="M0.5,5 Q6,-1 11.5,5 Q6,10 0.5,5Z" fill="#8aa0c0" stroke="#3a4a6a" stroke-width="0.8"/><circle cx="6.5" cy="5" r="2.5" fill="#1a2a5a"/><circle cx="6" cy="4.5" r="0.8" fill="#7ab0e8"/></svg>
<svg style="left:51px;top:144px" width="16" height="16" viewBox="0 0 16 16"><path d="M2,8 L2,4 Q2,1 5,1 Q8,1 8,4 L8,6" fill="none" stroke="#c09a30" stroke-width="2"/><rect x="5" y="7" width="11" height="8" fill="#d8b040" stroke="#a88020" stroke-width="0.6"/><g fill="#a88020"><rect x="7" y="9" width="1" height="1"/><rect x="10" y="9" width="1" height="1"/><rect x="13" y="9" width="1" height="1"/><rect x="8" y="12" width="1" height="1"/><rect x="11" y="12" width="1" height="1"/></g></svg>
<svg style="left:69px;top:145px" width="12" height="12" viewBox="0 0 12 12"><circle cx="6" cy="6" r="5.5" fill="#e8c048" stroke="#d8a830" stroke-width="0.8"/><circle cx="6" cy="6" r="3" fill="#f4d870"/></svg>
<div class="a" style="left:84px;top:146px;width:11px;height:11px;border:1.5px solid #000;background:#fff"></div>
<div class="a" style="left:108px;top:140px;font-family:'Liberation Serif',serif;font-size:18px;line-height:24px;transform:scaleX(1);transform-origin:left">0</div>
<svg style="left:265px;top:147px" width="12" height="8" viewBox="0 0 12 8"><path d="M1,1 L6,6 L11,1" fill="none" stroke="#333" stroke-width="1.2"/></svg>
<div class="a" style="left:288px;top:142px;width:1px;height:18px;background:#c0c0c0"></div>
<div class="a" style="left:291px;top:140px;width:120px;height:22px;background:#fff;border:1px solid #6e6e6e"></div>
<div class="a" style="left:296px;top:146px;width:11px;height:11px;border:1px solid #000;background:#00d8ff"></div>
<div class="a" style="left:320px;top:139px;font-family:'Liberation Serif',serif;font-size:17px;line-height:24px;color:#333">青</div>
<svg style="left:391px;top:147px" width="12" height="8" viewBox="0 0 12 8"><path d="M1,1 L6,6 L11,1" fill="none" stroke="#333" stroke-width="1.2"/></svg>
<div class="a" style="left:413px;top:142px;width:1px;height:18px;background:#c0c0c0"></div>
<div class="a" style="left:417px;top:140px;width:180px;height:22px;background:#fff;border:1px solid #6e6e6e"></div>
<div class="a" style="left:422px;top:150px;width:60px;height:1px;background:#000"></div>
<div class="a" style="left:491px;top:140px;font-family:'Liberation Serif',serif;font-size:17px;line-height:22px;letter-spacing:1.2px">ByLayer</div>
<svg style="left:576px;top:147px" width="12" height="8" viewBox="0 0 12 8"><path d="M1,1 L6,6 L11,1" fill="none" stroke="#333" stroke-width="1.2"/></svg>
<svg style="left:600px;top:143px" width="16" height="16" viewBox="0 0 16 16"><line x1="0" y1="15" x2="15" y2="15" stroke="#000" stroke-width="1.5" stroke-dasharray="2,1"/><path d="M3,13 L13,2 L14.5,3 L5,14 Z" fill="#222"/><path d="M11,4 L13.5,1" stroke="#d8a030" stroke-width="1.5"/></svg>
<svg style="left:0;top:0" width="1164" height="796" viewBox="0 0 1164 796"><rect x="365.5" y="332.5" width="389" height="208" fill="none" stroke="#06defa" stroke-width="3"/><rect x="393.5" y="355.5" width="331" height="157" fill="none" stroke="#06defa" stroke-width="3"/><rect x="443.5" y="391.5" width="248" height="94" fill="none" stroke="#06defa" stroke-width="3"/><g stroke="#ffffff" stroke-width="1" fill="none"><line x1="761.5" y1="376" x2="761.5" y2="536"/><line x1="681" y1="456.5" x2="841" y2="456.5"/><rect x="755.5" y="450.5" width="12" height="12"/></g><g stroke="#ffffff" stroke-width="1" fill="none"><rect x="49.5" y="654.5" width="8.5" height="8.5"/><line x1="53.5" y1="654" x2="53.5" y2="619"/><path d="M53.5,608 L49.5,619.5 L57.5,619.5 Z M53.5,610 L52,619 M53.5,610 L55,619"/><line x1="58" y1="658.5" x2="92" y2="658.5"/><path d="M104,658.5 L92.5,654.5 L92.5,662.5 Z M102,658.5 L93,657 M102,658.5 L93,660"/><path d="M49,590 L54,594 L59,590 M54,594 L54,600"/><path d="M113,653 L122,663 M122,653 L113,663"/></g><g><rect x="879.5" y="644.5" width="197" height="8.5" fill="#000" stroke="#8c8c8c" stroke-width="1"/><rect x="880" y="649" width="27" height="4" fill="#7a7a7a"/><rect x="907" y="645" width="56" height="4" fill="#7a7a7a"/><rect x="963" y="649" width="113" height="4" fill="#7a7a7a"/></g><g fill="#8a8a8a" font-family="Liberation Sans" font-size="16.5" letter-spacing="-0.9"><text x="895.5" y="641">2.5</text><text x="1061" y="641">17.5</text><text x="873.5" y="667">0</text><text x="952.5" y="667">7.5</text></g></svg>
<div class="a" style="left:29px;top:683px;width:26px;height:26px;background:#efefef;border:1px solid #a8a8a8"></div>
<div class="a" style="left:54px;top:683px;width:26px;height:26px;background:#efefef;border:1px solid #a8a8a8"></div>
<svg style="left:40px;top:690px" width="8" height="13" viewBox="0 0 8 13"><polygon points="8,0 8,13 0.5,6.5" fill="#6e6e6e"/></svg>
<svg style="left:63px;top:690px" width="8" height="13" viewBox="0 0 8 13"><polygon points="0,0 0,13 7.5,6.5" fill="#6e6e6e"/></svg>
<svg style="left:78px;top:682px" width="80" height="28" viewBox="0 0 80 28"><path d="M2.5,0.5 L15,26.5 L63.5,26.5 L76,0.5" fill="#fff" stroke="#111" stroke-width="1.1"/><line x1="15" y1="26.5" x2="63.5" y2="26.5" stroke="#888" stroke-width="1"/></svg>
<div class="a" style="left:99px;top:684px;font-size:18px;line-height:24px">模型</div>
<div class="a" style="left:29px;top:682px;width:1077px;height:1px;background:#5a5a5a"></div>
<div class="a" style="left:6px;top:713px;font-family:'Liberation Serif',serif;font-size:19px;line-height:24px;color:#222;white-space:pre;letter-spacing:1px">命令:</div>
<div class="a" style="left:75px;top:713px;font-family:'Liberation Serif',serif;font-size:19px;line-height:24px;color:#222;white-space:pre;letter-spacing:1.5px">*取消*</div>
<div class="a" style="left:7px;top:739px;font-size:12px;line-height:16px;white-space:pre">命令:</div>
<div class="a" style="left:46px;top:741px;width:2px;height:13px;background:#000"></div>
<div class="a" style="left:1134px;top:717px;width:26px;height:21px;background:#f0f0f0"></div>
<svg style="left:1141px;top:719px" width="11" height="18" viewBox="0 0 11 18"><path d="M1.5,6.5 L5.5,2 L9.5,6.5 M1.5,12 L5.5,16.5 L9.5,12" fill="none" stroke="#5a5a5a" stroke-width="1.8"/></svg>
<div class="a" style="left:1033px;top:740px;width:101px;height:28px;background:#f0f0f0"></div>
<div class="a" style="left:1058px;top:741px;width:26px;height:26px;background:#cdcdcd"></div>
<svg style="left:1041px;top:747px" width="10" height="14" viewBox="0 0 10 14"><path d="M7,1 L2,6.5 L7,12" fill="none" stroke="#555" stroke-width="2"/></svg>
<svg style="left:1114px;top:747px" width="10" height="14" viewBox="0 0 10 14"><path d="M2,1 L7,6.5 L2,12" fill="none" stroke="#555" stroke-width="2"/></svg>
<div class="a" style="left:6px;top:771px;font-size:19px;line-height:24px;white-space:pre">86.393690,  81.315501,  0.000000</div>
<div class="a" style="left:1px;top:769px;width:1161px;height:1px;background:#fbfbfb"></div>
<div class="a" style="left:406px;top:773px;font-size:18px;line-height:24px">栅格</div>
<div class="a" style="left:455px;top:773px;font-size:18px;line-height:24px">正交</div>
<div class="a" style="left:500px;top:772px;width:46px;height:23px;background:#e2ecf6;border:1px dashed #3a5cc0"></div>
<div class="a" style="left:502px;top:773px;font-size:18px;line-height:24px;white-space:nowrap">极轴</div>
<div class="a" style="left:548px;top:772px;width:82px;height:23px;background:#e2ecf6;border:1px dashed #3a5cc0"></div>
<div class="a" style="left:550px;top:773px;font-size:18px;line-height:24px;white-space:nowrap">对象捕捉</div>
<div class="a" style="left:632px;top:772px;width:82px;height:23px;background:#e2ecf6;border:1px dashed #3a5cc0"></div>
<div class="a" style="left:634px;top:773px;font-size:18px;line-height:24px;white-space:nowrap">对象追踪</div>
<div class="a" style="left:716px;top:772px;width:50px;height:23px;background:#e2ecf6;border:1px dashed #3a5cc0"></div>
<div class="a" style="left:718px;top:772px;font-size:20px;line-height:24px;white-space:nowrap">DYN</div>
<div class="a" style="left:768px;top:772px;width:46px;height:23px;background:#e2ecf6;border:1px dashed #3a5cc0"></div>
<div class="a" style="left:770px;top:773px;font-size:18px;line-height:24px;white-space:nowrap">线宽</div>
<div class="a" style="left:818px;top:773px;font-size:18px;line-height:24px;color:#3434c8;white-space:nowrap">提交软件问题或增加新功能</div>
<div class="a" style="left:1047px;top:776px;width:111px;height:14px;background:#fff"></div>
<svg style="left:1047px;top:776px" width="18" height="15" viewBox="0 0 18 15"><polygon points="0.5,14 3,0.5 8,0.5 7,14" fill="#178a98"/><polygon points="8.5,0.5 13,0.5 17,14 9.5,14" fill="#178a98"/><line x1="0" y1="13" x2="16" y2="5" stroke="#d8f4f8" stroke-width="1"/></svg>
<div class="a" style="left:1069px;top:774px;font-size:13px;line-height:18px;white-space:nowrap;color:#222;letter-spacing:0.2px">CAD.MxCloud</div>
<!--ICONS END-->
<!-- borders -->
<div class="a" style="left:0;top:0;width:1164px;height:1px;background:#555"></div>
<div class="a" style="left:0;top:0;width:1px;height:796px;background:#1f2530"></div>
<div class="a" style="left:1px;top:0;width:1px;height:796px;background:#6a7080"></div>
<div class="a" style="left:1162px;top:0;width:1px;height:796px;background:#6a7080"></div>
<div class="a" style="left:1163px;top:0;width:1px;height:796px;background:#1f2530"></div>

</div>
</body></html>
